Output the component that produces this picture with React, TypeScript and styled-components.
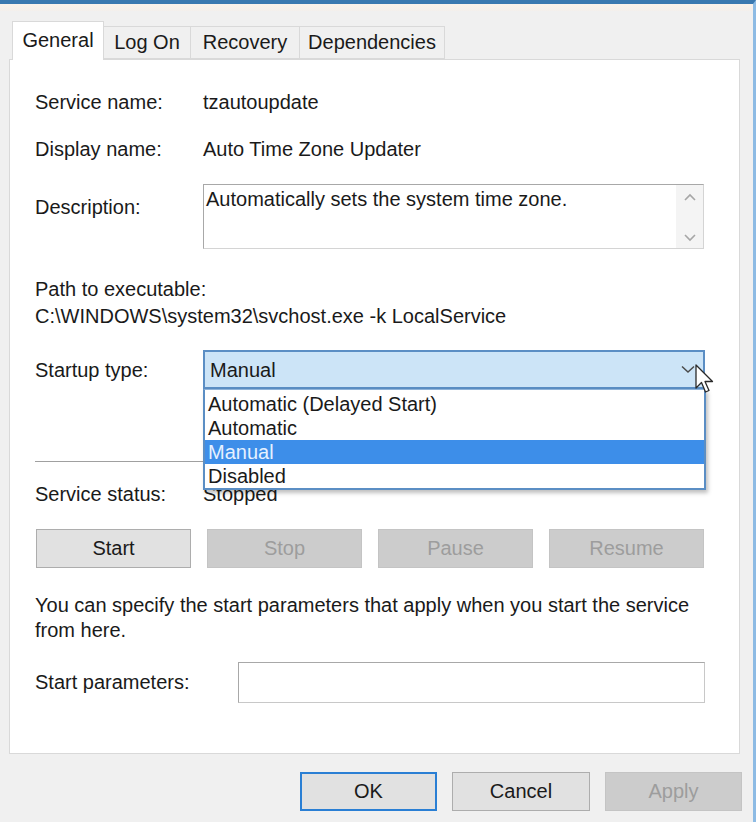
import React from 'react';
import styled, { createGlobalStyle, css } from 'styled-components';

const GlobalStyle = createGlobalStyle`
    html, body {
        margin: 0;
        padding: 0;
        background: #f0f0f0;
    }
    body {
        font-family: "Liberation Sans", Arial, sans-serif;
        font-size: 20px;
        color: #1a1a1a;
    }
`;

// --- window frame ---

const Window = styled.div`
    position: relative;
    box-sizing: border-box;
    width: 756px;
    height: 822px;
    overflow: hidden;
    background: #f0f0f0;
    border-top: 4px solid #3a78b0;
    border-right: 3px solid #8dbbe4;
    display: flex;
    flex-direction: column;
`;

const TopGlow = styled.div`
    height: 7px;
    background: linear-gradient(#faf1ea, #f3efec);
`;

const TabStrip = styled.div`
    display: flex;
    align-items: flex-end;
    height: 49px;
    padding-left: 12px;
    margin-bottom: -1px;
    position: relative;
    z-index: 1;
`;

const Tab = styled.div<{ $active?: boolean; $width: number }>`
    box-sizing: border-box;
    width: ${(p) => p.$width}px;
    display: flex;
    align-items: center;
    justify-content: center;
    border: 1px solid #d9d9d9;
    border-bottom: none;
    margin-right: -1px;
    white-space: nowrap;
    ${(p) =>
        p.$active
            ? css`
                  height: 39px;
                  background: #ffffff;
                  padding-bottom: 2px;
              `
            : css`
                  height: 33px;
                  background: #f0f0f0;
                  border-bottom: 1px solid #d9d9d9;
                  margin-bottom: 1px;
              `}
`;

const Panel = styled.div`
    box-sizing: border-box;
    height: 695px;
    margin: 0 13px 0 9px;
    background: #ffffff;
    border: 1px solid #d9d9d9;
    padding: 30px 34px 0 25px;
    display: flex;
    flex-direction: column;
`;

// --- rows inside the tab page ---

const Row = styled.div<{ $gap?: number; $top?: boolean }>`
    display: grid;
    grid-template-columns: 168px 1fr;
    align-items: ${(p) => (p.$top ? 'start' : 'center')};
    margin-top: ${(p) => p.$gap ?? 0}px;
    line-height: 24px;
`;

const Label = styled.div<{ $offset?: number }>`
    white-space: nowrap;
    padding-top: ${(p) => p.$offset ?? 0}px;
`;

const Value = styled.div`
    white-space: nowrap;
`;

const Line = styled.div<{ $gap?: number }>`
    line-height: 24px;
    margin-top: ${(p) => p.$gap ?? 0}px;
    white-space: nowrap;
`;

const DescriptionBox = styled.div`
    box-sizing: border-box;
    height: 65px;
    border: 1px solid #d4d4d4;
    border-top-color: #a8a8a8;
    border-left-color: #a8a8a8;
    display: flex;
    margin-right: 1px;
`;

const DescriptionText = styled.div`
    flex: 1;
    padding: 2px 2px;
    line-height: 24px;
`;

const ScrollTrack = styled.div`
    width: 27px;
    background: #f4f4f4;
    display: flex;
    flex-direction: column;
    justify-content: space-between;
    align-items: center;
    padding: 8px 0 6px;
`;

const Chevron = ({ up }: { up?: boolean }) => (
    <svg width="12" height="8" viewBox="0 0 12 8">
        <path
            d={up ? 'M1 7 L6 2 L11 7' : 'M1 1 L6 6 L11 1'}
            fill="none"
            stroke="#a6a6a6"
            strokeWidth="1.6"
        />
    </svg>
);

const ComboWrap = styled.div`
    position: relative;
`;

const Combo = styled.div`
    box-sizing: border-box;
    height: 39px;
    background: #cce4f7;
    border: 2px solid #5b8ec4;
    display: flex;
    align-items: center;
    justify-content: space-between;
    padding: 0 8px 0 5px;
`;

const DropList = styled.div`
    position: absolute;
    top: 39px;
    left: 0;
    width: 503px;
    box-sizing: border-box;
    background: #ffffff;
    border: 2px solid #5b8ec4;
    border-top: 1px solid #8fb3d9;
    padding-top: 2px;
    box-shadow: 2px 3px 4px rgba(0, 0, 0, 0.25);
    z-index: 5;
`;

const Option = styled.div<{ $selected?: boolean }>`
    height: 24px;
    line-height: 24px;
    padding-left: 3px;
    white-space: nowrap;
    background: ${(p) => (p.$selected ? '#3d8ee9' : 'transparent')};
    color: ${(p) => (p.$selected ? '#e6f1ff' : '#1a1a1a')};
`;

const Cursor = styled.svg`
    position: absolute;
    right: -12px;
    top: 14px;
    z-index: 6;
`;

const Separator = styled.div`
    height: 1px;
    background: #a0a0a0;
    margin-top: 72px;
`;

const ButtonRow = styled.div<{ $gap: number }>`
    display: grid;
    grid-template-columns: repeat(4, 155px);
    justify-content: space-between;
    margin-top: ${(p) => p.$gap}px;
    padding-left: 1px;
    margin-right: 1px;
`;

const Button = styled.div<{ $disabled?: boolean; $default?: boolean; $width?: number }>`
    box-sizing: border-box;
    height: 39px;
    ${(p) => p.$width && `width: ${p.$width}px;`}
    display: flex;
    align-items: center;
    justify-content: center;
    background: ${(p) => (p.$disabled ? '#cccccc' : '#e1e1e1')};
    border: ${(p) => (p.$default ? '2px solid #2a7fd4' : `1px solid ${p.$disabled ? '#c4c4c4' : '#adadad'}`)};
    color: ${(p) => (p.$disabled ? '#9d9d9d' : '#1a1a1a')};
`;

const Paragraph = styled.div`
    margin-top: 25px;
    line-height: 25px;
`;

const ParamRow = styled.div`
    display: grid;
    grid-template-columns: 203px 1fr;
    align-items: center;
    margin-top: 19px;
`;

const TextInput = styled.div`
    box-sizing: border-box;
    height: 41px;
    border: 1px solid #a8a8a8;
    border-right-color: #c8c8c8;
    border-bottom-color: #c8c8c8;
    background: #ffffff;
`;

const Footer = styled.div`
    display: flex;
    justify-content: flex-end;
    gap: 15px;
    padding: 18px 11px 0 0;
`;

export default function App() {
    return (
        <>
            <GlobalStyle />
            <Window>
                <TopGlow />
                <TabStrip>
                    <Tab $active $width={92}>General</Tab>
                    <Tab $width={88}>Log On</Tab>
                    <Tab $width={110}>Recovery</Tab>
                    <Tab $width={146}>Dependencies</Tab>
                </TabStrip>

                <Panel>
                    <Row>
                        <Label>Service name:</Label>
                        <Value>tzautoupdate</Value>
                    </Row>
                    <Row $gap={23}>
                        <Label>Display name:</Label>
                        <Value>Auto Time Zone Updater</Value>
                    </Row>
                    <Row $gap={23} $top>
                        <Label $offset={11}>Description:</Label>
                        <DescriptionBox>
                            <DescriptionText>Automatically sets the system time zone.</DescriptionText>
                            <ScrollTrack>
                                <Chevron up />
                                <Chevron />
                            </ScrollTrack>
                        </DescriptionBox>
                    </Row>

                    <Line $gap={28}>Path to executable:</Line>
                    <Line $gap={3}>C:\WINDOWS\system32\svchost.exe -k LocalService</Line>

                    <Row $gap={22}>
                        <Label>Startup type:</Label>
                        <ComboWrap>
                            <Combo>
                                <span>Manual</span>
                                <svg width="14" height="9" viewBox="0 0 14 9">
                                    <path d="M1 1.5 L7 7 L13 1.5" fill="none" stroke="#4a4a4a" strokeWidth="1.5" />
                                </svg>
                            </Combo>
                            <DropList>
                                <Option>Automatic (Delayed Start)</Option>
                                <Option>Automatic</Option>
                                <Option $selected>Manual</Option>
                                <Option>Disabled</Option>
                            </DropList>
                            <Cursor width="22" height="32" viewBox="0 0 22 32">
                                <path
                                    d="M1 1 L1 24 L6.5 18.5 L10.5 28 L14 26.5 L10 17.5 L17.5 17.5 Z"
                                    fill="#ffffff"
                                    stroke="#2a2a2a"
                                    strokeWidth="1.3"
                                    strokeLinejoin="round"
                                />
                            </Cursor>
                        </ComboWrap>
                    </Row>

                    <Separator />

                    <Row $gap={20}>
                        <Label>Service status:</Label>
                        <Value>Stopped</Value>
                    </Row>

                    <ButtonRow $gap={23}>
                        <Button>Start</Button>
                        <Button $disabled>Stop</Button>
                        <Button $disabled>Pause</Button>
                        <Button $disabled>Resume</Button>
                    </ButtonRow>

                    <Paragraph>
                        You can specify the start parameters that apply when you start the service from here.
                    </Paragraph>

                    <ParamRow>
                        <Label>Start parameters:</Label>
                        <TextInput />
                    </ParamRow>
                </Panel>

                <Footer>
                    <Button $default $width={137}>OK</Button>
                    <Button $width={138}>Cancel</Button>
                    <Button $disabled $width={137}>Apply</Button>
                </Footer>
            </Window>
        </>
    );
}
